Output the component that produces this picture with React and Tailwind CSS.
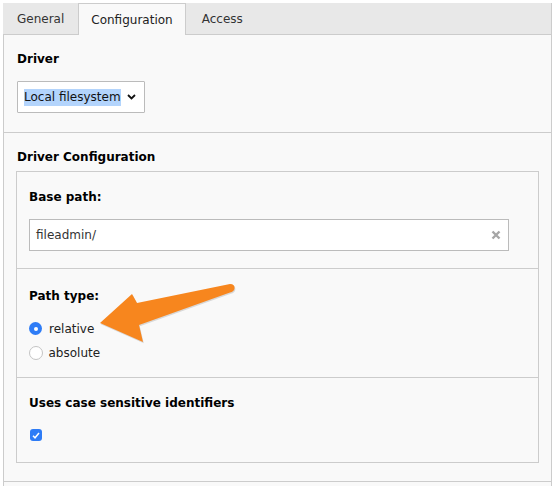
import React from "react";

export default function App() {
  const font = { fontFamily: '"DejaVu Sans", Verdana, sans-serif' };
  return (
    <div className="relative w-[556px] h-[486px] bg-white overflow-hidden text-[12px] text-[#333]" style={font}>
      <div className="ml-[3px] mr-[4px] mt-[3px] border-r border-[#ccc]">
        {/* Tabs */}
        <div className="flex h-[32px] bg-[#e8e8e8] border-b border-[#ccc]">
          <div className="px-[13px] flex items-center h-[31px] border border-transparent">General</div>
          <div className="px-[12px] flex items-center h-[32px] border-x border-t border-[#ccc] bg-[#f9f9f9] text-[#222]">Configuration</div>
          <div className="px-[15px] flex items-center h-[31px] border border-transparent">Access</div>
        </div>
        {/* Panel */}
        <div className="bg-[#f9f9f9] border-l border-[#ccc]">
          <div className="pt-[17px] pb-[19px] px-[13px] border-b border-[#ccc]">
            <div className="font-bold text-black leading-[15px]">Driver</div>
            <div className="mt-[14px] w-[128px] h-[32px] bg-white border border-[#bbb] rounded-[1px] flex items-center pl-[6px] pr-[8px] justify-between">
              <span className="bg-[#b3d4fc] text-[#111] leading-[17px]">Local filesystem</span>
              <svg width="9" height="6" viewBox="0 0 9 6">
                <path d="M1 1 L4.5 4.5 L8 1" fill="none" stroke="#111" strokeWidth="1.8" />
              </svg>
            </div>
          </div>
          <div className="pt-[17px] px-[12px] pb-[18px] border-b border-[#ccc]">
            <div className="font-bold text-black leading-[15px] ml-[1px]">Driver Configuration</div>
            <div className="mt-[6px] border border-[#ccc] bg-[#f9f9f9]">
              <div className="pt-[18px] pb-[17px] px-[12px] border-b border-[#ccc]">
                <div className="font-bold text-black leading-[15px]">Base path:</div>
                <div className="mt-[14px] w-[480px] h-[32px] bg-white border border-[#bbb] flex items-center pl-[6px] pr-[7px] justify-between">
                  <span className="text-[#333]">fileadmin/</span>
                  <svg width="10" height="10" viewBox="0 0 10 10">
                    <path d="M1.5 1.5 L8.5 8.5 M8.5 1.5 L1.5 8.5" stroke="#a6a6a6" strokeWidth="2.4" />
                  </svg>
                </div>
              </div>
              <div className="pt-[20px] pb-[17px] px-[12px] border-b border-[#ccc]">
                <div className="font-bold text-black leading-[15px]">Path type:</div>
                <div className="mt-[17px] flex flex-col gap-[9px]">
                  <div className="flex items-center h-[15px]">
                    <span className="w-[13px] h-[13px] rounded-full bg-[#2e7cf6] flex items-center justify-center ml-[0px]">
                      <span className="w-[4px] h-[4px] rounded-full bg-white" />
                    </span>
                    <span className="ml-[7px] text-[#222]">relative</span>
                  </div>
                  <div className="flex items-center h-[15px]">
                    <span className="w-[14px] h-[14px] rounded-full bg-white border border-[#c4c4c4] -ml-[0.5px]" />
                    <span className="ml-[6px] text-[#222]">absolute</span>
                  </div>
                </div>
              </div>
              <div className="pt-[18px] pb-[21px] px-[12px]">
                <div className="font-bold text-black leading-[15px]">Uses case sensitive identifiers</div>
                <div className="mt-[18px] ml-[1px] w-[12px] h-[12px] rounded-[3px] bg-[#2e7cf6] flex items-center justify-center">
                  <svg width="8" height="7" viewBox="0 0 8 7">
                    <path d="M1 3.8 L3 5.8 L7 1" fill="none" stroke="white" strokeWidth="1.5" />
                  </svg>
                </div>
              </div>
            </div>
          </div>
          <div className="h-[20px]" />
        </div>
      </div>
      {/* Arrow annotation */}
      <svg className="absolute left-0 top-0 pointer-events-none" width="556" height="486" viewBox="0 0 556 486">
        <path d="M100 323 L132 294 L137 303 L230 284 Q235 284 234.5 288.5 Q234 291.5 230 292.5 L139 325 L143 342 Z" fill="#9a9a9a" opacity="0.35" transform="translate(0.8,1.2)" />
        <path d="M100 323 L132 294 L137 303 L230 284 Q235 284 234.5 288.5 Q234 291.5 230 292.5 L139 325 L143 342 Z" fill="#f7861e" />
      </svg>
    </div>
  );
}
